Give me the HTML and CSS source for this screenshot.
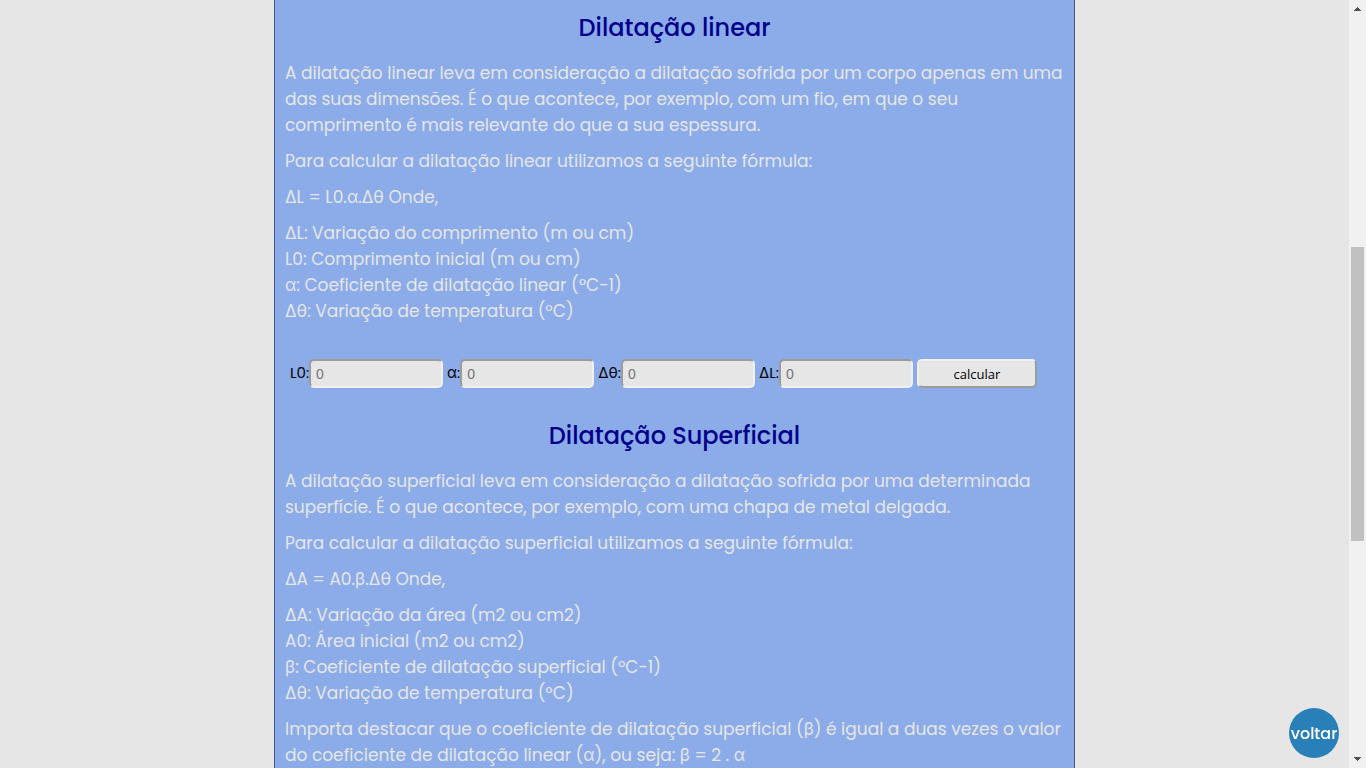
FILE: index.html
```
<!DOCTYPE html>
<html lang="pt-BR">
<head>
<meta charset="utf-8">
<title>Dilatação térmica</title>
<link rel="stylesheet" href="styles.css">
</head>
<body>
<div class="viewport">
  <main class="panel">
    <section class="topic">
      <h2 class="title">Dilatação linear</h2>
      <p>A dilatação linear leva em consideração a dilatação sofrida por um corpo apenas em uma<br>das suas dimensões. É o que acontece, por exemplo, com um fio, em que o seu<br>comprimento é mais relevante do que a sua espessura.</p>
      <p>Para calcular a dilatação linear utilizamos a seguinte fórmula:</p>
      <p>ΔL = L0.α.Δθ Onde,</p>
      <p>ΔL: Variação do comprimento (m ou cm)<br>L0: Comprimento inicial (m ou cm)<br>α: Coeficiente de dilatação linear (ºC-1)<br>Δθ: Variação de temperatura (ºC)</p>
      <form class="calculator">
        <div class="field"><label for="l0">L0:</label><input id="l0" type="text" placeholder="0"></div>
        <div class="field"><label for="alpha">α:</label><input id="alpha" type="text" placeholder="0"></div>
        <div class="field"><label for="theta">Δθ:</label><input id="theta" type="text" placeholder="0"></div>
        <div class="field"><label for="dl">ΔL:</label><input id="dl" type="text" placeholder="0"></div>
        <button class="calculate" type="button">calcular</button>
      </form>
    </section>
    <section class="topic">
      <h2 class="title">Dilatação Superficial</h2>
      <p>A dilatação superficial leva em consideração a dilatação sofrida por uma determinada<br>superfície. É o que acontece, por exemplo, com uma chapa de metal delgada.</p>
      <p>Para calcular a dilatação superficial utilizamos a seguinte fórmula:</p>
      <p>ΔA = A0.β.Δθ Onde,</p>
      <p>ΔA: Variação da área (m2 ou cm2)<br>A0: Área inicial (m2 ou cm2)<br>β: Coeficiente de dilatação superficial (ºC-1)<br>Δθ: Variação de temperatura (ºC)</p>
      <p>Importa destacar que o coeficiente de dilatação superficial (β) é igual a duas vezes o valor<br>do coeficiente de dilatação linear (α), ou seja: β = 2 . α</p>
    </section>
  </main>
  <a class="back" href="#">voltar</a>
</div>
<div class="scrollbar" aria-hidden="true">
  <svg class="arrow" viewBox="0 0 17 17" shape-rendering="crispEdges"><path d="M8 7h1v1h1v1h1v1h1v1H5v-1h1V9h1V8h1z"/></svg>
  <div class="track"><div class="thumb"></div></div>
  <svg class="arrow" viewBox="0 0 17 17" shape-rendering="crispEdges"><path d="M5 6h7v1h-1v1h-1v1H9v1H8V9H7V8H6V7H5z"/></svg>
</div>
</body>
</html>
```
FILE: styles.css
```
* { box-sizing: border-box; }
body {
  display: flex;
  height: 100vh;
  margin: 0;
  overflow: hidden;
  background: #e6e6e6;
  font-family: Poppins, Inter, "Noto Sans", sans-serif;
}
.viewport { flex: 1; min-width: 0; overflow: hidden; }
.panel {
  max-width: 801px;
  min-height: 100vh;
  margin: 0 auto;
  padding: 10px 10px 0;
  border: solid #435a86;
  border-width: 0 1px;
  background: #8bace9;
}
.title {
  margin: 0 0 14px;
  color: #00008b;
  font-size: 24px;
  font-weight: 500;
  line-height: 36px;
  text-align: center;
}
.topic p {
  margin: 0 0 10px;
  color: #e6e6e6;
  font-size: 17px;
  line-height: 26px;
  white-space: nowrap;
}
.calculator {
  display: flex;
  gap: 4px;
  margin: 35px 0 30px;
  padding-left: 5px;
}
.field { display: flex; align-items: center; }
.field label { padding-bottom: 2px; font-size: 15px; line-height: 24px; }
.field input {
  width: 134px;
  height: 29px;
  padding: 1px 5px;
  border: 2px solid;
  border-color: #9b9b9b #f0f0f0 #f0f0f0 #9b9b9b;
  border-radius: 5px;
  background: #e6e6e6;
  font: 14px "Liberation Sans", sans-serif;
}
.calculate {
  width: 120px;
  height: 29px;
  border: 2px solid;
  border-color: #f0f0f0 #9b9b9b #9b9b9b #f0f0f0;
  border-radius: 5px;
  background: #e6e6e6;
  color: #000;
  font: 13px "Open Sans", sans-serif;
}
.back {
  position: fixed;
  right: 27px;
  bottom: 10px;
  display: flex;
  align-items: center;
  justify-content: center;
  width: 50px;
  height: 50px;
  border-radius: 50%;
  background: #2980b9;
  color: #fff;
  font-size: 16px;
  font-weight: 500;
  text-decoration: none;
}
.scrollbar {
  display: flex;
  flex-direction: column;
  width: 17px;
  background: #f1f1f1;
}
.arrow { flex: none; width: 17px; height: 17px; fill: #505050; }
.track { flex: 1; padding: 0 2px; }
.track::before { content: ""; display: block; height: 230px; }
.thumb { height: 40%; background: #c1c1c1; }
```
